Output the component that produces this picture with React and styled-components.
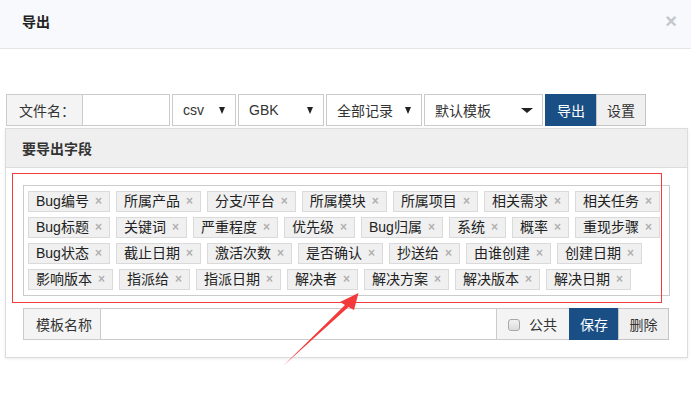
import React from 'react';
import styled, { createGlobalStyle, css } from 'styled-components';

const GlobalStyle = createGlobalStyle`
  html, body {
    margin: 0;
    padding: 0;
    background: #fff;
  }
  body {
    font-family: "Liberation Sans", "Noto Sans CJK SC", Arial, sans-serif;
    font-size: 14px;
    color: #333;
  }
  * {
    box-sizing: border-box;
  }
`;

const PRIMARY = '#1a4f85';

const FIELD_ROWS = [
  ['Bug编号', '所属产品', '分支/平台', '所属模块', '所属项目', '相关需求', '相关任务'],
  ['Bug标题', '关键词', '严重程度', '优先级', 'Bug归属', '系统', '概率', '重现步骤'],
  ['Bug状态', '截止日期', '激活次数', '是否确认', '抄送给', '由谁创建', '创建日期'],
  ['影响版本', '指派给', '指派日期', '解决者', '解决方案', '解决版本', '解决日期'],
];

const SELECTS = [
  { label: 'csv', width: 64 },
  { label: 'GBK', width: 86 },
  { label: '全部记录', width: 96 },
  { label: '默认模板', width: 119, caret: true },
];

const Page = styled.div`
  position: relative;
  width: 691px;
  height: 396px;
  overflow: hidden;
`;

const Header = styled.div`
  display: flex;
  align-items: flex-start;
  justify-content: space-between;
  height: 49px;
  padding: 12px 14px 0 22px;
  background: #f8f9fc;
  border-bottom: 1px solid #e4e6ea;
`;

const Title = styled.div`
  font-size: 14px;
  font-weight: bold;
  line-height: 20px;
  color: #222;
`;

const Close = styled.div`
  font-size: 20px;
  font-weight: bold;
  line-height: 18px;
  color: #c4c6ca;
`;

const Body = styled.div`
  padding: 45px 3px 0 5px;
`;

const Toolbar = styled.div`
  display: flex;
  align-items: stretch;
  height: 32px;
  margin-left: 1px;
`;

const Group = styled.div`
  display: flex;
  margin-right: ${(p) => p.$gap || 0}px;
`;

const Addon = styled.div`
  display: flex;
  align-items: center;
  gap: 9px;
  width: ${(p) => p.$width}px;
  padding-left: ${(p) => p.$pad || 12}px;
  background: #f4f4f4;
  border: 1px solid #cbcbcb;
  ${(p) => p.$joined && css`border-right: none;`}
  white-space: nowrap;
`;

const Input = styled.div`
  width: ${(p) => p.$width}px;
  background: #fff;
  border: 1px solid #cbcbcb;
  ${(p) => p.$joined && css`border-right: none;`}
`;

const Select = styled.div`
  display: flex;
  align-items: center;
  justify-content: space-between;
  width: ${(p) => p.$width}px;
  margin-right: 2px;
  padding: 0 8px 0 10px;
  background: #fff;
  border: 1px solid #cbcbcb;
`;

const Triangle = styled.span`
  width: 0;
  height: 0;
  border-left: ${(p) => (p.$wide ? 6 : 3.5)}px solid transparent;
  border-right: ${(p) => (p.$wide ? 6 : 3.5)}px solid transparent;
  border-top: ${(p) => (p.$wide ? 5 : 7)}px solid #222;
  margin-right: ${(p) => (p.$wide ? 1 : 2)}px;
`;

const Button = styled.div`
  display: flex;
  align-items: center;
  justify-content: center;
  width: ${(p) => p.$width}px;
  background: ${(p) => (p.$primary ? PRIMARY : '#f0f0f0')};
  color: ${(p) => (p.$primary ? '#fff' : '#333')};
  border: 1px solid ${(p) => (p.$primary ? PRIMARY : '#c4c4c4')};
  ${(p) => p.$primary && css`border-right: none;`}
`;

const Panel = styled.div`
  margin-top: 2px;
  background: #fff;
  border: 1px solid #dcdcdc;
  box-shadow: 0 1px 3px rgba(0, 0, 0, 0.08);
`;

const PanelHeading = styled.div`
  height: 39px;
  padding: 0 16px;
  display: flex;
  align-items: center;
  background: #efefef;
  border-bottom: 1px solid #dcdcdc;
  font-weight: bold;
  color: #333;
`;

const PanelBody = styled.div`
  padding: 17px;
  display: flex;
  flex-direction: column;
  gap: 12px;
`;

const FieldBox = styled.div`
  display: flex;
  flex-direction: column;
  gap: 5px;
  padding: 5px 4px;
  border: 1px solid #cccccc;
`;

const FieldRow = styled.div`
  display: flex;
  gap: 6px;
`;

const Tag = styled.div`
  display: flex;
  align-items: center;
  height: 21px;
  padding: 0 7px;
  background: #f0f0f0;
  border: 1px solid #dadada;
  line-height: 19px;
  color: #222;
  white-space: nowrap;
`;

const Remove = styled.span`
  margin-left: 6px;
  font-size: 12px;
  font-weight: bold;
  color: #b0b0b0;
`;

const TemplateRow = styled.div`
  display: flex;
  height: 32px;
`;

const Checkbox = styled.span`
  display: inline-block;
  width: 12px;
  height: 12px;
  margin-top: 2px;
  border: 1px solid #a8a8a8;
  border-radius: 3px;
  background: linear-gradient(#f2f2f2, #dcdcdc);
`;

const Highlight = styled.div`
  position: absolute;
  left: 12px;
  top: 173px;
  width: 650px;
  height: 130px;
  border: 1px solid #f23c3c;
  pointer-events: none;
`;

const ArrowMark = styled.svg`
  position: absolute;
  left: 0;
  top: 0;
  pointer-events: none;
`;

const App = () => (
  <Page>
    <GlobalStyle />
    <Header>
      <Title>导出</Title>
      <Close>×</Close>
    </Header>
    <Body>
      <Toolbar>
        <Group $gap={2}>
          <Addon $width={76} $joined>文件名：</Addon>
          <Input $width={88} />
        </Group>
        {SELECTS.map((s) => (
          <Select key={s.label} $width={s.width}>
            {s.label}
            <Triangle $wide={s.caret} />
          </Select>
        ))}
        <Group>
          <Button $primary $width={51}>导出</Button>
          <Button $width={50}>设置</Button>
        </Group>
      </Toolbar>
      <Panel>
        <PanelHeading>要导出字段</PanelHeading>
        <PanelBody>
          <FieldBox>
            {FIELD_ROWS.map((row, i) => (
              <FieldRow key={i}>
                {row.map((f) => (
                  <Tag key={f}>
                    {f}
                    <Remove>×</Remove>
                  </Tag>
                ))}
              </FieldRow>
            ))}
          </FieldBox>
          <TemplateRow>
            <Addon $width={77} $joined>模板名称</Addon>
            <Input $width={396} $joined />
            <Addon $width={73} $pad={11} $joined>
              <Checkbox />
              公共
            </Addon>
            <Button $primary $width={49}>保存</Button>
            <Button $width={51}>删除</Button>
          </TemplateRow>
        </PanelBody>
      </Panel>
    </Body>
    <Highlight />
    <ArrowMark width="691" height="396" viewBox="0 0 691 396">
      <polygon
        points="283,366 345,305 340,302 358.5,293 354,310 348.5,307"
        fill="#f23a3a"
      />
    </ArrowMark>
  </Page>
);

export default App;
